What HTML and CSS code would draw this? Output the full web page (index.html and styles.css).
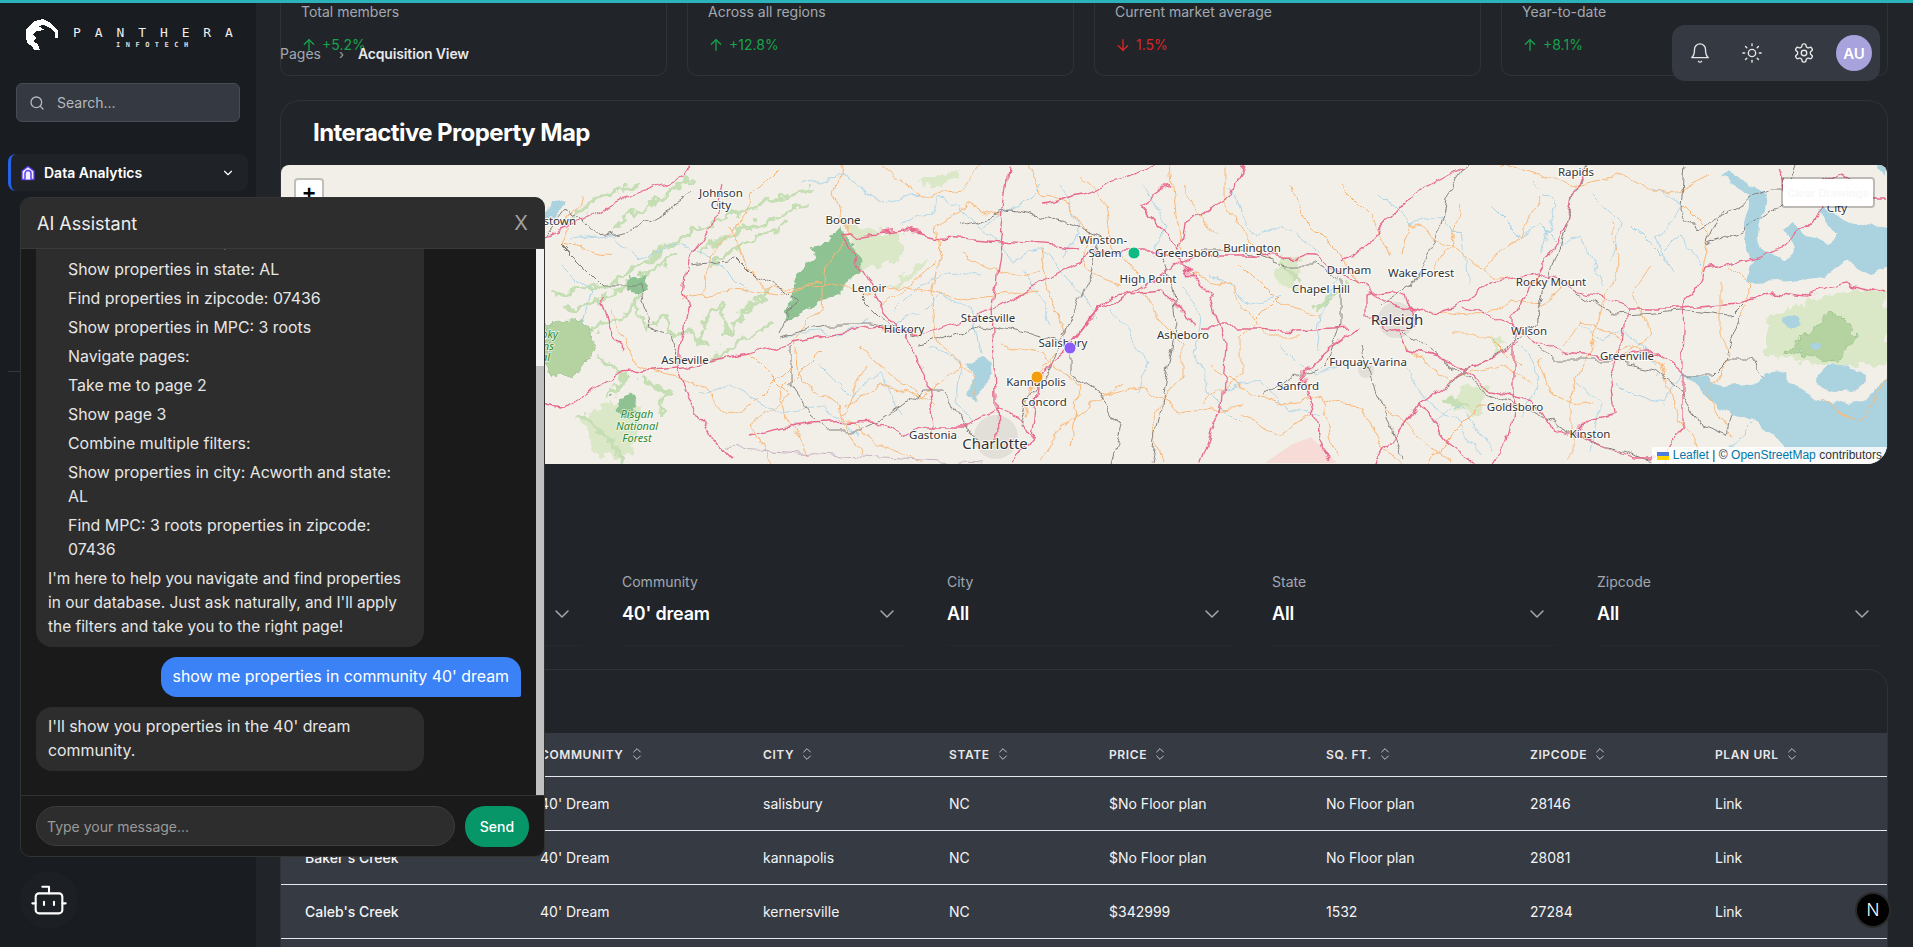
FILE: index.html
```html
<!DOCTYPE html>
<html lang="en">
<head>
<meta charset="utf-8">
<title>Acquisition View</title>
<link rel="stylesheet" href="styles.css">
</head>
<body>
<div class="topline"></div>
<div class="app">
  <aside class="sidebar">
    <div class="brand">
      <svg class="brand-mark" viewBox="0 0 34 32"><path d="M1 10 L6 5 L10 2 L18 0 L24 3 L29 8 L33 12 L33 19 L30 19 L30 13 L25 9 L19 6 L13 7 L20 11 L12 12 L8 15 L11 19 L8 22 L13 25 L15 31 L9 31 L7 27 L3 25 L1 20 Z"/></svg>
      <div class="brand-text">
        <div class="brand-name">PANTHERA</div>
        <div class="brand-sub">INFOTECH</div>
      </div>
    </div>
    <div class="search">
      <svg class="ic ic-16" viewBox="0 0 24 24"><circle cx="11" cy="11" r="8"/><path d="m21 21-4.3-4.3"/></svg>
      <span>Search...</span>
    </div>
    <div class="nav-item">
      <svg class="nav-home" viewBox="0 0 16 16"><path class="home-body" d="M8 1.5 14 6v8.5H2V6Z"/><path class="home-door" d="M5 14.5V8.6a3 3 0 0 1 6 0v5.9"/></svg>
      <span class="nav-label">Data Analytics</span>
      <svg class="ic ic-14" viewBox="0 0 24 24"><path d="m6 9 6 6 6-6"/></svg>
    </div>
    <div class="side-divider"></div>
  </aside>

  <main class="main">
    <section class="stats">
      <div class="stat"><div class="stat-label">Total members</div><div class="trend up"><svg class="ic ic-16" viewBox="0 0 24 24"><path d="M12 20V4"/><path d="m5 11 7-7 7 7"/></svg><span>+5.2%</span></div></div>
      <div class="stat"><div class="stat-label">Across all regions</div><div class="trend up"><svg class="ic ic-16" viewBox="0 0 24 24"><path d="M12 20V4"/><path d="m5 11 7-7 7 7"/></svg><span>+12.8%</span></div></div>
      <div class="stat"><div class="stat-label">Current market average</div><div class="trend down"><svg class="ic ic-16" viewBox="0 0 24 24"><path d="M12 4v16"/><path d="m19 13-7 7-7-7"/></svg><span>1.5%</span></div></div>
      <div class="stat"><div class="stat-label">Year-to-date</div><div class="trend up"><svg class="ic ic-16" viewBox="0 0 24 24"><path d="M12 20V4"/><path d="m5 11 7-7 7 7"/></svg><span>+8.1%</span></div></div>
    </section>

    <section class="map-card">
      <h2 class="map-title">Interactive Property Map</h2>
      <div class="map">
        <svg class="map-svg" viewBox="0 0 1606 299" preserveAspectRatio="none">
          <defs>
            <filter id="wob" filterUnits="userSpaceOnUse" x="0" y="0" width="1606" height="299"><feTurbulence type="fractalNoise" baseFrequency="0.045" numOctaves="3" seed="4"/><feDisplacementMap in="SourceGraphic" scale="14" xChannelSelector="R" yChannelSelector="G"/></filter>
            <filter id="wob2" filterUnits="userSpaceOnUse" x="0" y="0" width="1606" height="299"><feTurbulence type="fractalNoise" baseFrequency="0.09" numOctaves="3" seed="9"/><feDisplacementMap in="SourceGraphic" scale="16" xChannelSelector="R" yChannelSelector="G"/></filter>
          </defs>
          <g filter="url(#wob2)">
            <g class="forest-light">
              <path d="M568 62 620 68 622 95 581 105Z"/><path d="M607 122 646 92 642 105 615 122Z"/><path d="M642 15 681 5 676 15 646 25Z"/>
              <path d="M334 235 355 228 360 255 351 288 316 292 299 255Z"/><path d="M1484 155 1540 130 1606 125 1606 200 1540 200 1484 190Z"/>
              <path d="M1180 218 1210 222 1200 250 1172 245Z"/><path d="M1000 90 1020 95 1015 130 995 115Z"/><path d="M1210 170 1225 175 1215 190Z"/>
            </g>
            <g class="forest-strip">
              <path d="M412 65 450 50 490 35 529 25"/><path d="M420 85 460 65 500 50 525 40"/><path d="M430 100 470 75 505 60"/><path d="M275 130 300 125 330 120 360 100 412 65"/><path d="M285 145 320 135 350 118 395 90"/><path d="M300 170 320 160 345 150 360 125"/>
              <path d="M355 140 365 165 385 150 390 175 410 165 425 180"/><path d="M420 180 425 150 440 140 445 170 470 140 490 125"/><path d="M430 195 460 175 490 160"/><path d="M320 195 345 210 330 230"/><path d="M360 215 385 225 380 250"/><path d="M300 250 330 275 340 295"/><path d="M290 55 320 30 360 20"/><path d="M335 60 375 35 410 15"/><path d="M1065 120 1050 130 1035 145"/><path d="M1165 235 1185 240"/><path d="M1000 100 1020 115"/>
            </g>
            <path class="forest-mid" d="M264 158 303 155 316 182 290 215 264 202Z"/>
            <path class="forest-mid" d="M1506 188 1552 145 1575 168 1556 195Z"/>
            <path class="forest-dark" d="M503 158 516 112 538 82 559 65 572 78 581 102 555 128 529 145Z"/>
            <path class="forest-dark" d="M334 232 355 230 353 250 335 250Z"/>
            <path class="forest-dark" d="M345 115 365 110 368 128 350 128Z"/>
          </g>
          <circle class="urban" cx="715" cy="272" r="22"/><circle class="urban" cx="1115" cy="155" r="18"/><circle class="urban" cx="1085" cy="205" r="8"/>
          <path class="hatched" d="M984 298 1010 280 1030 272 1056 298Z"/>
          <g class="water" filter="url(#wob)">
            <path d="M1465 118 1470 95 1462 72 1470 32 1438 12 1445 8 1485 30 1478 80 1502 98 1515 85 1500 60 1511 55 1530 75 1543 78 1555 70 1535 45 1550 45 1565 55 1606 62 1606 102 1588 108 1565 95 1543 112 1502 117Z"/>
            <path d="M1597 0 1606 0 1606 14Z"/>
            <path d="M1402 208 1425 212 1443 222 1470 218 1485 205 1506 202 1515 225 1534 235 1550 240 1584 235 1606 212 1606 290 1506 290 1479 258 1450 250 1420 225Z"/>
            <ellipse cx="1561" cy="213" rx="24" ry="14"/><ellipse cx="1511" cy="157" rx="11" ry="8"/><ellipse cx="1533" cy="183" rx="4" ry="5"/>
            <path d="M685 200 700 192 711 198 706 215 700 232 688 228 692 212Z"/>
            <path d="M268 40 285 35 275 55 264 52Z"/>
          </g>
          <g filter="url(#wob)">
            <g class="river">
              <path d="M290 75 330 70 360 95 390 80 430 90 470 130"/><path d="M505 170 535 165 560 170 590 155"/><path d="M600 160 640 150 660 130 690 145 700 190"/><path d="M620 60 650 50 660 30 700 60 740 40 760 20"/><path d="M700 60 730 95 760 85 800 130 815 155"/>
              <path d="M830 145 850 170 868 195 855 225"/><path d="M900 120 920 150 915 190 930 230 960 260"/><path d="M950 20 960 50 975 70 1000 60 1040 90"/><path d="M1060 110 1040 150 1035 185"/><path d="M1100 30 1130 60 1160 50 1180 70 1190 120"/>
              <path d="M1210 40 1240 70 1260 60 1280 80 1300 70 1320 120"/><path d="M1120 200 1150 240 1180 260 1200 290"/><path d="M1230 170 1250 190 1260 215 1240 250"/><path d="M1330 210 1350 230 1380 240 1400 210"/><path d="M940 225 980 215 1000 240 1040 250"/>
              <path d="M420 230 450 220 500 250 540 240 580 270"/><path d="M1300 160 1320 175 1345 165 1375 200"/><path d="M1350 60 1380 90 1400 70 1420 100"/><path d="M740 100 760 130 770 160"/><path d="M1480 250 1450 280 1440 298"/>
              <path d="M615 145 640 120 670 105 700 110"/><path d="M650 185 680 200 675 240 690 260"/><path d="M540 200 570 230 600 210 620 250"/><path d="M1250 15 1275 40 1260 90"/><path d="M1370 20 1400 40 1375 75 1390 110"/><path d="M1310 30 1340 60 1330 100"/><path d="M1000 180 1030 210 1060 200"/><path d="M1150 260 1180 240 1210 285"/><path d="M1290 215 1320 240 1310 285"/><path d="M860 20 885 60 870 90"/><path d="M780 20 800 60 785 90"/><path d="M520 20 560 10 600 35 640 30"/><path d="M930 110 970 140 1000 130"/><path d="M280 100 310 130 300 160"/>
            </g>
            <g class="road-o">
              <path d="M560 0 552 30 570 70 545 100 540 140 512 175 520 215 555 240 580 290"/><path d="M447 60 470 110 482 125 545 120 580 130 620 120 685 135 720 130 760 125"/><path d="M400 135 450 125 500 130 540 115"/><path d="M330 145 345 175 355 200 420 220 445 250 470 240 510 200"/><path d="M540 185 500 225 505 255 530 290"/><path d="M578 180 610 210 640 230 655 240"/>
              <path d="M600 140 640 110 660 90 655 60 690 40 720 50"/><path d="M745 0 760 30 790 40 810 70 800 100 835 120"/><path d="M660 75 650 130 655 180 690 210 700 230"/><path d="M760 85 770 130 785 175"/><path d="M860 120 880 160 900 180 900 210 870 250 880 298"/><path d="M800 10 825 40 830 80 860 115"/><path d="M890 0 895 50 905 90"/>
              <path d="M910 110 945 120 985 170 1020 170"/><path d="M945 0 945 40 970 75 990 95"/><path d="M930 200 970 230 1000 240 1040 230 1055 290"/><path d="M840 220 780 260 760 298"/><path d="M780 180 755 210 745 250"/><path d="M1010 20 1020 50 1060 90 1075 120"/>
              <path d="M1120 90 1130 60 1180 85 1210 110 1230 115"/><path d="M1150 145 1200 150 1230 135 1260 140 1290 120"/><path d="M1120 180 1170 215 1220 200 1250 220"/><path d="M1280 180 1300 155 1320 165 1345 175"/><path d="M1330 60 1340 100 1320 140 1310 180 1290 230 1290 298"/><path d="M1220 0 1250 10 1290 20 1340 10 1390 30 1430 10"/>
              <path d="M1400 40 1430 70 1420 110"/><path d="M1320 195 1350 180 1380 200 1390 240 1420 290"/><path d="M1240 240 1200 240 1160 280 1150 298"/><path d="M1040 235 1080 240 1100 280 1120 298"/><path d="M1000 130 960 170 960 210 920 240"/><path d="M500 0 470 30 465 50 430 90 420 130"/><path d="M300 30 280 80 330 90"/><path d="M1440 120 1440 170 1450 190 1425 225 1450 270"/>
              <path d="M560 240 600 220 640 230 680 200"/><path d="M1540 235 1580 260 1606 210"/><path d="M600 0 640 30 680 25 700 0"/><path d="M680 90 720 110 760 105"/><path d="M470 190 510 230 470 260 490 298"/><path d="M585 200 560 250 600 280 640 298"/><path d="M720 180 760 190 800 220 790 280"/><path d="M820 230 860 220 900 250 960 240"/><path d="M960 100 1000 140 1040 150"/><path d="M1060 20 1090 50 1110 90"/><path d="M1170 170 1210 170 1240 200"/><path d="M1180 40 1170 80 1150 110"/><path d="M1260 30 1240 70 1200 100"/><path d="M1370 100 1350 130 1370 170 1340 195"/><path d="M1260 195 1270 230 1310 240"/><path d="M960 250 1000 270 1030 250"/><path d="M1100 240 1130 265 1170 298"/><path d="M900 20 935 70"/><path d="M1450 100 1470 120 1460 150"/>
            </g>
            <g class="road-g">
              <path d="M264 72 285 45 320 70 350 65 412 30"/><path d="M410 100 455 95 470 110 505 125 515 135 500 165"/><path d="M280 80 320 120 358 120 368 165 388 170 398 200"/><path d="M500 170 540 160 590 160 640 170"/><path d="M575 125 600 150 625 170"/><path d="M640 180 700 160 760 170 790 180 790 210 820 230 840 262 830 298"/>
              <path d="M510 180 510 220 530 250 548 265 580 265 620 240 640 225 660 225 680 260 700 275"/><path d="M790 150 770 200 745 240 740 260"/><path d="M680 60 730 45 780 55 820 70 810 110 780 170"/><path d="M880 90 890 120 895 160 880 240 870 298"/><path d="M920 85 960 85 1005 100 1035 100 1060 115 1060 160 1045 200 1010 215 980 230"/>
              <path d="M1100 140 1130 120 1160 60 1165 30 1185 0"/><path d="M1120 165 1200 225 1240 240 1295 270 1370 295"/><path d="M1165 220 1230 180 1256 150 1290 40 1305 0"/><path d="M1295 125 1330 150 1400 145 1450 150 1460 140"/><path d="M1256 180 1270 195 1330 195 1375 205 1400 225 1420 260 1445 270 1450 250"/>
              <path d="M1400 210 1430 210 1445 195 1470 195 1482 210"/><path d="M1445 195 1460 150"/><path d="M1443 45 1428 80 1460 65 1500 40 1515 0"/><path d="M1120 290 1090 210 1080 180"/><path d="M1403 0 1400 45 1415 65 1490 25 1515 25"/>
            </g>
            <path class="border" d="M445 283 580 292 700 298"/>
            <g class="road-p">
              <path d="M264 72 303 55 347 32 390 15 410 2"/><path d="M440 18 433 58 407 95 403 128 407 142 399 182 397 203 407 228 431 272 451 295"/><path d="M397 203 338 208 312 222 282 243 260 238"/>
              <path d="M397 203 470 190 511 177 545 170 594 163 642 168 685 155 720 142 765 115 811 88 840 85 880 85 902 98 920 90 965 90 1034 92 1075 118 1115 142"/><path d="M715 275 713 195 711 142 717 95 726 22 728 0"/><path d="M563 72 583 108 603 145 633 182 646 212 652 262"/>
              <path d="M563 72 620 65 659 73 720 77 798 83"/><path d="M750 272 759 208 789 182 819 145 867 118 902 98"/><path d="M468 270 529 258 594 255 620 272 642 262 685 262 715 245 737 252 750 272 730 298"/><path d="M1302 5 1279 68 1256 108 1234 152 1234 228 1225 278 1211 298"/><path d="M1184 2 1125 35 1093 72 1061 98"/>
              <path d="M1115 142 1138 148 1175 142 1211 118 1256 108 1297 125 1320 132 1347 142 1402 142 1456 138 1493 128 1525 132 1565 120 1606 128"/><path d="M1115 162 1125 185 1165 195 1202 222 1252 235 1270 262 1297 270 1352 292 1375 292"/><path d="M1184 142 1229 158 1256 177 1284 188 1329 193 1375 188 1402 208"/><path d="M1238 178 1206 195 1165 218 1138 238 1102 288 1093 298"/><path d="M1138 238 1165 275 1197 298"/>
              <path d="M1079 162 1047 185 1020 208 1025 228 1047 295"/><path d="M920 162 975 162 1015 165 1070 162"/><path d="M1347 142 1343 178 1329 208 1334 248 1306 255 1293 268"/><path d="M1425 102 1465 95 1502 82 1543 42"/><path d="M1425 102 1420 118 1404 138 1402 195 1402 262 1380 298"/><path d="M1085 130 1110 125 1125 130 1135 160 1105 165 1085 150Z"/>
              <path d="M790 180 830 130 880 125 915 160"/><path d="M900 100 930 130 945 180 940 240 920 298"/><path d="M890 20 860 40 900 85 905 60 950 30 960 0"/><path d="M320 130 330 170 345 185"/><path d="M760 40 800 30 850 10 880 0"/><path d="M1495 0 1505 30 1560 10 1590 30 1606 30"/>
            </g>
          </g>
          <g class="lbl">
            <text x="295" y="60" text-anchor="end">Morristown</text>
            <text x="440" y="32" text-anchor="middle">Johnson</text><text x="440" y="44" text-anchor="middle">City</text>
            <text x="562" y="59" text-anchor="middle">Boone</text><text x="588" y="127" text-anchor="middle">Lenoir</text><text x="623" y="168" text-anchor="middle">Hickory</text><text x="707" y="157" text-anchor="middle">Statesville</text><text x="404" y="199" text-anchor="middle">Asheville</text>
            <text x="822" y="79" text-anchor="middle">Winston-</text><text x="824" y="92" text-anchor="middle">Salem</text><text x="906" y="92" text-anchor="middle">Greensboro</text><text x="867" y="118" text-anchor="middle">High Point</text><text x="782" y="182" text-anchor="middle">Salisbury</text><text x="902" y="174" text-anchor="middle">Asheboro</text>
            <text x="755" y="221" text-anchor="middle">Kannapolis</text><text x="763" y="241" text-anchor="middle">Concord</text><text x="652" y="274" text-anchor="middle">Gastonia</text>
            <text x="1295" y="11" text-anchor="middle">Rapids</text><text x="1556" y="47" text-anchor="middle">City</text><text x="971" y="87" text-anchor="middle">Burlington</text><text x="1068" y="109" text-anchor="middle">Durham</text><text x="1140" y="112" text-anchor="middle">Wake Forest</text><text x="1040" y="128" text-anchor="middle">Chapel Hill</text><text x="1270" y="121" text-anchor="middle">Rocky Mount</text>
            <text x="1248" y="170" text-anchor="middle">Wilson</text><text x="1346" y="195" text-anchor="middle">Greenville</text><text x="1087" y="201" text-anchor="middle">Fuquay-Varina</text><text x="1017" y="225" text-anchor="middle">Sanford</text><text x="1234" y="246" text-anchor="middle">Goldsboro</text><text x="1309" y="273" text-anchor="middle">Kinston</text>
          </g>
          <g class="lbl lbl-big"><text x="714" y="284" text-anchor="middle">Charlotte</text><text x="1116" y="160" text-anchor="middle">Raleigh</text></g>
          <g class="lbl-park">
            <text x="277" y="173" text-anchor="end">Smoky</text><text x="273" y="185" text-anchor="end">Mountains</text><text x="269" y="196" text-anchor="end">National</text>
            <text x="356" y="253" text-anchor="middle">Pisgah</text><text x="356" y="265" text-anchor="middle">National</text><text x="356" y="277" text-anchor="middle">Forest</text>
          </g>
          <circle class="pin pin-green" cx="853" cy="88" r="6"/><circle class="pin pin-purple" cx="789" cy="183" r="6"/><circle class="pin pin-orange" cx="756" cy="212" r="6"/>
        </svg>
        <div class="zoom-ctl"><span>+</span></div>
        <button class="clear-btn">Clear Drawings</button>
        <div class="attribution">
          <svg class="flag" viewBox="0 0 12 8"><rect class="flag-b" width="12" height="4"/><rect class="flag-y" y="4" width="12" height="4"/></svg>
          <span class="att-link">Leaflet</span> | © <span class="att-link">OpenStreetMap</span> contributors
        </div>
      </div>
    </section>

    <section class="filters">
      <div class="field"><div class="field-label">MPC</div><div class="field-value"><span>All</span><svg class="ic ic-24" viewBox="0 0 24 24"><path d="m6 9 6 6 6-6"/></svg></div></div>
      <div class="field"><div class="field-label">Community</div><div class="field-value"><span>40' dream</span><svg class="ic ic-24" viewBox="0 0 24 24"><path d="m6 9 6 6 6-6"/></svg></div></div>
      <div class="field"><div class="field-label">City</div><div class="field-value"><span>All</span><svg class="ic ic-24" viewBox="0 0 24 24"><path d="m6 9 6 6 6-6"/></svg></div></div>
      <div class="field"><div class="field-label">State</div><div class="field-value"><span>All</span><svg class="ic ic-24" viewBox="0 0 24 24"><path d="m6 9 6 6 6-6"/></svg></div></div>
      <div class="field"><div class="field-label">Zipcode</div><div class="field-value"><span>All</span><svg class="ic ic-24" viewBox="0 0 24 24"><path d="m6 9 6 6 6-6"/></svg></div></div>
    </section>

    <section class="table-card">
      <table class="table">
        <colgroup><col class="c1"><col class="c2"><col class="c3"><col class="c4"><col class="c5"><col class="c6"><col class="c7"><col class="c8"></colgroup>
        <thead>
          <tr>
            <th>Name</th>
            <th><span class="th">Community<svg class="ic ic-16" viewBox="0 0 24 24"><path d="m7 15 5 5 5-5"/><path d="m7 9 5-5 5 5"/></svg></span></th>
            <th><span class="th">City<svg class="ic ic-16" viewBox="0 0 24 24"><path d="m7 15 5 5 5-5"/><path d="m7 9 5-5 5 5"/></svg></span></th>
            <th><span class="th">State<svg class="ic ic-16" viewBox="0 0 24 24"><path d="m7 15 5 5 5-5"/><path d="m7 9 5-5 5 5"/></svg></span></th>
            <th><span class="th">Price<svg class="ic ic-16" viewBox="0 0 24 24"><path d="m7 15 5 5 5-5"/><path d="m7 9 5-5 5 5"/></svg></span></th>
            <th><span class="th">Sq. Ft.<svg class="ic ic-16" viewBox="0 0 24 24"><path d="m7 15 5 5 5-5"/><path d="m7 9 5-5 5 5"/></svg></span></th>
            <th><span class="th">Zipcode<svg class="ic ic-16" viewBox="0 0 24 24"><path d="m7 15 5 5 5-5"/><path d="m7 9 5-5 5 5"/></svg></span></th>
            <th><span class="th">Plan URL<svg class="ic ic-16" viewBox="0 0 24 24"><path d="m7 15 5 5 5-5"/><path d="m7 9 5-5 5 5"/></svg></span></th>
          </tr>
        </thead>
        <tbody>
          <tr><td class="name"></td><td>40' Dream</td><td>salisbury</td><td>NC</td><td>$No Floor plan</td><td>No Floor plan</td><td>28146</td><td>Link</td></tr>
          <tr><td class="name">Baker's Creek</td><td>40' Dream</td><td>kannapolis</td><td>NC</td><td>$No Floor plan</td><td>No Floor plan</td><td>28081</td><td>Link</td></tr>
          <tr><td class="name">Caleb's Creek</td><td>40' Dream</td><td>kernersville</td><td>NC</td><td>$342999</td><td>1532</td><td>27284</td><td>Link</td></tr>
          <tr><td class="name"></td><td></td><td></td><td></td><td></td><td></td><td></td><td></td></tr>
        </tbody>
      </table>
    </section>
  </main>
</div>

<div class="crumbs"><span class="crumb-muted">Pages</span><span class="crumb-sep">›</span><span class="crumb-current">Acquisition View</span></div>

<div class="toolbar">
  <svg class="ic ic-22" viewBox="0 0 24 24"><path d="M6 8a6 6 0 0 1 12 0c0 7 3 9 3 9H3s3-2 3-9"/><path d="M10.3 21a1.94 1.94 0 0 0 3.4 0"/></svg>
  <svg class="ic ic-22" viewBox="0 0 24 24"><circle cx="12" cy="12" r="4"/><path d="M12 2v2"/><path d="M12 20v2"/><path d="m4.93 4.93 1.41 1.41"/><path d="m17.66 17.66 1.41 1.41"/><path d="M2 12h2"/><path d="M20 12h2"/><path d="m6.34 17.66-1.41 1.41"/><path d="m19.07 4.93-1.41 1.41"/></svg>
  <svg class="ic ic-22" viewBox="0 0 24 24"><path d="M12.22 2h-.44a2 2 0 0 0-2 2v.18a2 2 0 0 1-1 1.73l-.43.25a2 2 0 0 1-2 0l-.15-.08a2 2 0 0 0-2.73.73l-.22.38a2 2 0 0 0 .73 2.73l.15.1a2 2 0 0 1 1 1.72v.51a2 2 0 0 1-1 1.74l-.15.09a2 2 0 0 0-.73 2.73l.22.38a2 2 0 0 0 2.73.73l.15-.08a2 2 0 0 1 2 0l.43.25a2 2 0 0 1 1 1.73V20a2 2 0 0 0 2 2h.44a2 2 0 0 0 2-2v-.18a2 2 0 0 1 1-1.73l.43-.25a2 2 0 0 1 2 0l.15.08a2 2 0 0 0 2.73-.73l.22-.39a2 2 0 0 0-.73-2.73l-.15-.08a2 2 0 0 1-1-1.74v-.5a2 2 0 0 1 1-1.74l.15-.09a2 2 0 0 0 .73-2.73l-.22-.38a2 2 0 0 0-2.73-.73l-.15.08a2 2 0 0 1-2 0l-.43-.25a2 2 0 0 1-1-1.73V4a2 2 0 0 0-2-2z"/><circle cx="12" cy="12" r="3"/></svg>
  <div class="avatar">AU</div>
</div>

<div class="chat">
  <div class="chat-head"><span>AI Assistant</span><span class="chat-close">X</span></div>
  <div class="chat-body">
    <div class="messages">
      <div class="bubble bot">
        <ul class="tips">
          <li>Find properties in city: Acworth</li>
          <li>Show properties in state: AL</li>
          <li>Find properties in zipcode: 07436</li>
          <li>Show properties in MPC: 3 roots</li>
          <li>Navigate pages:</li>
          <li>Take me to page 2</li>
          <li>Show page 3</li>
          <li>Combine multiple filters:</li>
          <li>Show properties in city: Acworth and state: AL</li>
          <li>Find MPC: 3 roots properties in zipcode: 07436</li>
        </ul>
        <p class="bubble-p">I'm here to help you navigate and find properties in our database. Just ask naturally, and I'll apply the filters and take you to the right page!</p>
      </div>
      <div class="bubble user">show me properties in community 40' dream</div>
      <div class="bubble bot">I'll show you properties in the 40' dream community.</div>
    </div>
    <div class="scroll-track"><div class="scroll-thumb"></div></div>
  </div>
  <div class="chat-foot">
    <div class="chat-input">Type your message...</div>
    <button class="send">Send</button>
  </div>
</div>

<div class="bot-fab"><svg class="bot-ic" viewBox="0 0 24 24"><path d="M12 8V4H8"/><rect x="4" y="8" width="16" height="12" rx="2"/><path d="M2 14h2"/><path d="M20 14h2"/><path d="M15 13v2"/><path d="M9 13v2"/></svg></div>
<div class="next-badge">N</div>
</body>
</html>
```
FILE: styles.css
```css
* { box-sizing: border-box; }
html, body { margin: 0; height: 100%; overflow: hidden; }
body { background: #212429; color: #fff; font-family: Inter, "Liberation Sans", sans-serif; font-size: 14px; position: relative; }

.ic { fill: none; stroke: currentColor; stroke-width: 2; stroke-linecap: round; stroke-linejoin: round; flex: none; display: block; }
.ic-14 { width: 14px; height: 14px; }
.ic-16 { width: 16px; height: 16px; }
.ic-22 { width: 22px; height: 22px; stroke-width: 1.5; }
.ic-24 { width: 24px; height: 24px; stroke-width: 1.5; }

.topline { position: absolute; left: 0; top: 0; right: 0; height: 3px; background: #2bb3bb; z-index: 50; }
.app { display: flex; height: 100%; }

.sidebar { width: 256px; flex: none; background: #191c20; padding: 19px 8px 0; }
.brand { display: flex; align-items: flex-start; gap: 14px; padding-left: 17px; height: 64px; }
.brand-mark { width: 34px; height: 32px; fill: #fff; shape-rendering: crispEdges; flex: none; }
.brand-name { font-family: "DejaVu Sans Mono", monospace; font-size: 13px; line-height: 13px; letter-spacing: 13.9px; color: #eee; margin-top: 7px; white-space: nowrap; }
.brand-sub { font-family: "DejaVu Sans Mono", monospace; font-size: 7px; font-weight: 700; line-height: 8px; letter-spacing: 5.5px; color: #ddd; margin: 2px 0 0 43px; white-space: nowrap; }
.search { margin: 0 8px; height: 39px; background: #353942; border: 1px solid #474b54; border-radius: 6px; display: flex; align-items: center; gap: 12px; padding: 0 12px; color: #b4b8bf; }
.search span { font-size: 14px; }
.nav-item { margin-top: 32px; height: 37px; background: #1f2226; border-left: 3px solid #2563eb; border-radius: 8px; display: flex; align-items: center; padding: 0 13px 0 9px; color: #fff; }
.nav-home { width: 16px; height: 16px; flex: none; }
.home-body { fill: #f1eeff; stroke: #5a3ff0; stroke-width: 1.3; stroke-linejoin: round; }
.home-door { fill: #f1eeff; stroke: #5a3ff0; stroke-width: 1.5; }
.nav-label { flex: 1; margin-left: 8px; font-weight: 600; font-size: 14px; }
.side-divider { margin-top: 180px; height: 1px; background: #34383e; }

.main { flex: 1; min-width: 0; padding: 0 25px 0 24px; }

.stats { display: grid; grid-template-columns: repeat(4, 1fr); gap: 20px; }
.stat { height: 76px; border: 1px solid #2f3339; border-top: 0; border-radius: 0 0 10px 10px; padding: 2px 20px 0; }
.stat-label { color: #a3a8b0; font-size: 14px; line-height: 20px; }
.trend { display: flex; align-items: center; gap: 5px; margin-top: 13px; line-height: 20px; font-size: 14px; }
.up { color: #16a34a; }
.down { color: #dc2626; }

.map-card { margin-top: 24px; border: 1px solid #2f3339; border-bottom: 0; border-radius: 20px; height: 364px; display: flex; flex-direction: column; }
.map-title { margin: 0; height: 64px; padding: 18px 0 0 32px; font-size: 24px; line-height: 28px; font-weight: 700; letter-spacing: -.6px; }
.map { position: relative; flex: 1; overflow: hidden; background: #f2efe9; border-radius: 8px 8px 20px 20px; }
.map-svg { display: block; width: 100%; height: 100%; }
.forest-light path { fill: #dbe8c8; }
.forest-strip path { fill: none; stroke: #c6deb4; stroke-width: 4; stroke-linejoin: round; stroke-linecap: round; }
.forest-mid { fill: #b5d3a0; stroke: #8fbd88; stroke-width: .7; }
.forest-dark { fill: #8fc292; }
.urban { fill: #e2dfd9; }
.hatched { fill: #f6dbd6; }
.water path, .water ellipse { fill: #aad3df; }
.river path { fill: none; stroke: #a9d4e6; stroke-width: .9; }
.road-o path { fill: none; stroke: #f9b878; stroke-width: 1; stroke-linejoin: round; }
.road-g path { fill: none; stroke: #86827e; stroke-width: 1; stroke-linejoin: round; }
.road-p path { fill: none; stroke: #e76a8d; stroke-width: 1.3; stroke-linejoin: round; }
.border { fill: none; stroke: #c9b3c4; stroke-width: 1.2; }
.lbl text { font-family: "Noto Sans", sans-serif; font-size: 11.5px; fill: #333; paint-order: stroke; stroke: rgba(255, 255, 255, .85); stroke-width: 2px; }
.lbl-big text { font-size: 15px; }
.lbl-park text { font-family: "Noto Sans", sans-serif; font-size: 11px; font-style: italic; fill: #2e8b2e; paint-order: stroke; stroke: rgba(255, 255, 255, .7); stroke-width: 1.5px; }
.pin { stroke: rgba(255, 255, 255, .85); stroke-width: 1; }
.pin-green { fill: #10b981; }
.pin-purple { fill: #8b5cf6; }
.pin-orange { fill: #f59e0b; }

.zoom-ctl { position: absolute; left: 13px; top: 13px; width: 30px; height: 60px; border: 2px solid rgba(0, 0, 0, .2); border-radius: 4px; background: #fff; background-clip: padding-box; text-align: center; color: #000; font: 700 22px/32px "Liberation Mono", monospace; }
.clear-btn { position: absolute; right: 12px; top: 12px; width: 94px; height: 31px; background: #fff; background-clip: padding-box; border: 2px solid rgba(0, 0, 0, .22); border-radius: 4px; color: #f7f7f7; font: 600 11px Inter, sans-serif; padding: 0; white-space: nowrap; }
.attribution { position: absolute; right: 0; bottom: 0; height: 17px; padding: 0 5px; background: rgba(255, 255, 255, .8); color: #333; font-family: "Liberation Sans", sans-serif; font-size: 12px; line-height: 17px; display: flex; align-items: center; gap: 3.5px; white-space: nowrap; }
.flag { width: 12px; height: 8px; }
.flag-b { fill: #4c7be1; }
.flag-y { fill: #ffd500; }
.att-link { color: #0078a8; }

.filters { margin-top: 107px; padding: 0 6px 0 17px; display: grid; grid-template-columns: repeat(5, 1fr); gap: 40px; }
.field { height: 75px; padding-top: 1px; border-bottom: 1px solid #26292e; }
.field-label { color: #a3a8b0; font-size: 14px; line-height: 20px; }
.field-value { margin-top: 10px; display: flex; align-items: center; justify-content: space-between; padding-right: 8px; font-size: 18px; line-height: 24px; font-weight: 600; letter-spacing: -.2px; color: #fff; }
.field-value .ic { color: #a3a8b0; }

.table-card { margin-top: 23px; border: 1px solid #2f3339; border-radius: 20px 20px 0 0; padding-top: 63px; overflow: hidden; height: 300px; }
.table { width: 100%; table-layout: fixed; border-collapse: collapse; background: #363a42; }
.c1 { width: 235px; } .c2 { width: 223px; } .c3 { width: 186px; } .c4 { width: 160px; } .c5 { width: 217px; } .c6 { width: 204px; } .c7 { width: 185px; } .c8 { width: auto; }
.table th { height: 43px; padding: 0 0 0 24px; text-align: left; font-size: 12px; font-weight: 600; letter-spacing: .6px; text-transform: uppercase; color: #e8e8e8; border-bottom: 1px solid #e5e7eb; }
.th { display: inline-flex; align-items: center; gap: 5px; }
.th .ic { color: #c4c7cc; stroke-width: 1.5; }
.table td { height: 54px; padding: 0 0 0 24px; font-size: 14px; color: #f3f4f6; border-bottom: 1px solid #e5e7eb; }
.table td.name { font-weight: 500; }

.crumbs { position: absolute; left: 280px; top: 44px; display: flex; align-items: center; line-height: 20px; font-size: 14px; }
.crumb-muted { color: #a3a8b0; }
.crumb-sep { color: #a3a8b0; margin: 0 14px 0 18px; font-size: 13px; }
.crumb-current { font-weight: 600; letter-spacing: -.15px; color: #e6e8eb; }

.toolbar { position: absolute; left: 1672px; top: 25px; width: 208px; height: 56px; background: #353942; border-radius: 13px; display: flex; align-items: center; padding-left: 17px; gap: 30px; color: #e6e6e6; }
.avatar { width: 36px; height: 36px; border-radius: 50%; background: #a8a3dc; color: #fff; font-weight: 600; font-size: 15px; display: flex; align-items: center; justify-content: center; margin-left: -9px; }

.chat { position: absolute; left: 20px; top: 197px; width: 525px; height: 660px; background: #1a1a1a; border: 1px solid #333; border-radius: 10px; display: flex; flex-direction: column; overflow: hidden; z-index: 20; }
.chat-head { height: 51px; flex: none; background: #2d2d2d; border-bottom: 1px solid #3a3a3a; display: flex; align-items: center; justify-content: space-between; padding: 0 16px; font-size: 18px; color: #eee; }
.chat-close { font-size: 20px; color: #a0a0a0; }
.chat-body { flex: 1; min-height: 0; display: flex; }
.messages { flex: 1; min-width: 0; overflow: hidden; display: flex; flex-direction: column; justify-content: flex-end; gap: 10px; padding: 0 15px 24px; }
.bubble { flex: none; padding: 8px 12px; border-radius: 16px; line-height: 24px; font-size: 15.9px; color: #e6e6e6; max-width: 388px; }
.bot { background: #2d2d2d; align-self: flex-start; width: 388px; }
.user { background: #3b82f6; color: #fff; align-self: flex-end; border-bottom-right-radius: 2px; }
.tips { list-style: none; margin: 0 0 0 20px; padding: 0; }
.tips li { margin-bottom: 5px; }
.bubble-p { margin: 0; font-size: 15.4px; }
.scroll-track { width: 8px; flex: none; background: #f1f1f1; display: flex; flex-direction: column; justify-content: flex-end; }
.scroll-thumb { height: 429px; background: #c1c1c1; }
.chat-foot { height: 61px; flex: none; border-top: 1px solid #333; display: flex; align-items: flex-start; gap: 10px; padding: 10px 15px 0; }
.chat-input { flex: 1; height: 40px; border: 1px solid #3d3d3d; border-radius: 20px; background: #2d2d2d; color: #9a9a9a; padding: 0 10px; line-height: 40px; font-size: 14px; }
.send { width: 64px; height: 41px; border: 0; border-radius: 20px; background: #079668; color: #fff; font: 500 14px Inter, sans-serif; padding: 0; }

.bot-fab { position: absolute; left: 20px; top: 871px; width: 58px; height: 58px; border-radius: 50%; background: #1c2024; display: flex; align-items: center; justify-content: center; z-index: 10; }
.bot-ic { width: 40px; height: 40px; fill: none; stroke: #fff; stroke-width: 1.25; stroke-linecap: round; stroke-linejoin: round; }
.next-badge { position: absolute; left: 1855px; top: 892px; width: 36px; height: 36px; border-radius: 50%; background: #000; border: 2px solid #2a2a2a; color: #fff; font-size: 17px; font-weight: 300; display: flex; align-items: center; justify-content: center; z-index: 10; }
```
